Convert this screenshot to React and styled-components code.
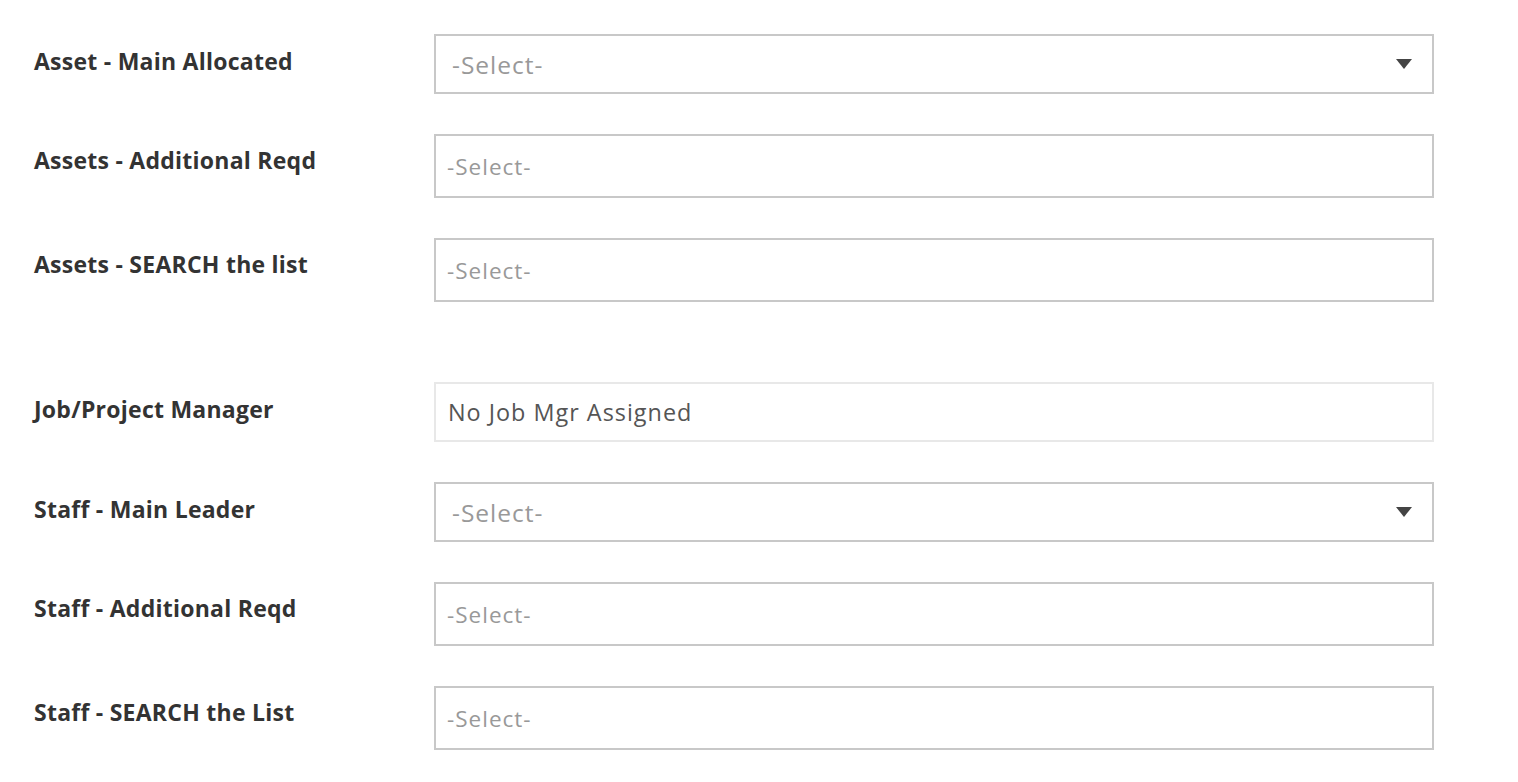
import React from "react";
import styled, { createGlobalStyle } from "styled-components";

const Global = createGlobalStyle`
  html, body { margin: 0; padding: 0; background: #fff; }
  body { font-family: "Open Sans", Arial, sans-serif; }
`;

const Form = styled.div`
  display: flex;
  flex-direction: column;
  padding: 34px 0 0 34px;
  gap: 40px;
  width: 1400px;
`;

const Group = styled.div`
  display: flex;
  flex-direction: column;
  gap: 40px;
  margin-top: ${(p) => (p.$spaced ? "40px" : "0")};
`;

const Row = styled.div`
  display: grid;
  grid-template-columns: 400px 1000px;
  align-items: start;
`;

const Label = styled.div`
  font-family: "Open Sans", Arial, sans-serif;
  font-weight: 700;
  font-size: 23px;
  letter-spacing: 0.25px;
  color: #333;
  padding-top: ${(p) => (p.$tall ? "11px" : "12px")};
  line-height: 30px;
`;

const Box = styled.div`
  box-sizing: border-box;
  height: ${(p) => (p.$tall ? "64px" : "60px")};
  border: 2px solid ${(p) => (p.$light ? "#e8e8e8" : "#c8c8c8")};
  background: #fff;
  display: flex;
  align-items: center;
  justify-content: space-between;
  padding: 0 20px 0 ${(p) => p.$pad || 12}px;
  font-family: "Open Sans", Arial, sans-serif;
  font-size: ${(p) => p.$size || 22.5}px;
  letter-spacing: 1px;
  color: ${(p) => (p.$value ? "#555" : "#999")};
`;

const Caret = styled.svg`
  width: 16px;
  height: 10px;
  flex: none;
`;

const Arrow = () => (
  <Caret viewBox="0 0 16 10">
    <path d="M0 0 H16 L8 10 Z" fill="#444" />
  </Caret>
);

const Field = ({ label, tall, light, value, caret, size, pad, text }) => (
  <Row>
    <Label $tall={tall}>{label}</Label>
    <Box $tall={tall} $light={light} $value={value} $size={size} $pad={pad}>
      <span>{text}</span>
      {caret && <Arrow />}
    </Box>
  </Row>
);

export default function App() {
  return (
    <>
      <Global />
      <Form>
        <Group>
          <Field label="Asset - Main Allocated" caret text="-Select-" size={24.5} pad={16} />
          <Field label="Assets - Additional Reqd" tall text="-Select-" pad={11} />
          <Field label="Assets - SEARCH the list" tall text="-Select-" pad={11} />
        </Group>
        <Group $spaced>
          <Field label="Job/Project Manager" light value size={23.4} text="No Job Mgr Assigned" />
          <Field label="Staff - Main Leader" caret text="-Select-" size={24.5} pad={16} />
          <Field label="Staff - Additional Reqd" tall text="-Select-" pad={11} />
          <Field label="Staff - SEARCH the List" tall text="-Select-" pad={11} />
        </Group>
      </Form>
    </>
  );
}
